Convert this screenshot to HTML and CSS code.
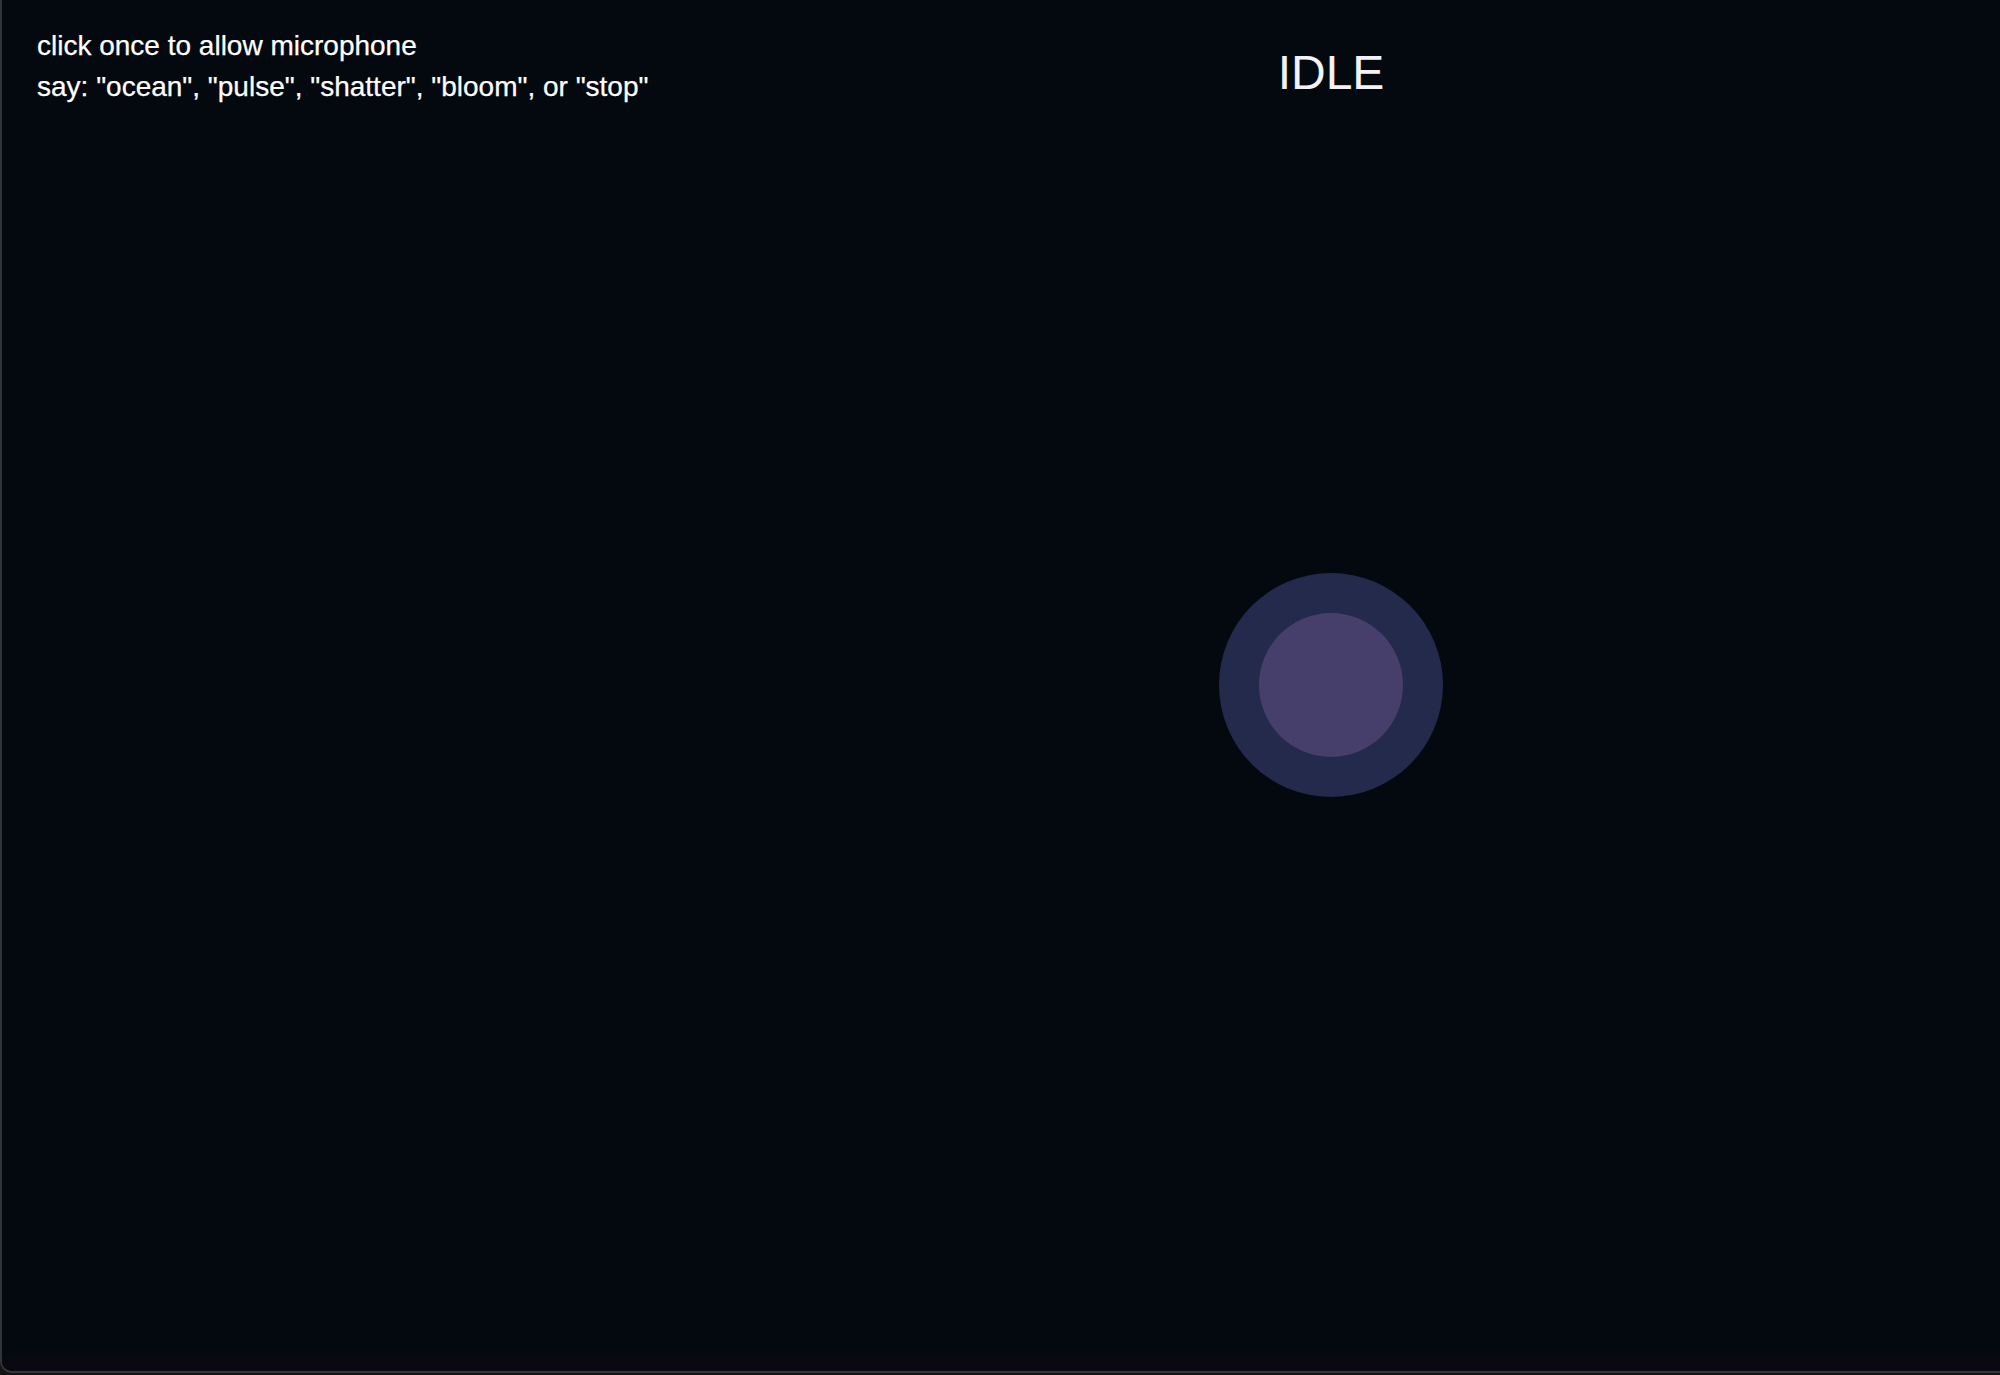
FILE: index.html
```html
<!DOCTYPE html>
<html>
<head>
<meta charset="utf-8">
<link rel="stylesheet" href="styles.css">
</head>
<body>
<div class="window">
  <div class="stage">
    <div class="hint">
      <div class="hint-line">click once to allow microphone</div>
      <div class="hint-line">say: "ocean", "pulse", "shatter", "bloom", or "stop"</div>
    </div>
    <div class="status">IDLE</div>
    <div class="orb"><div class="orb-core"></div></div>
  </div>
  <div class="strip"></div>
</div>
</body>
</html>
```

FILE: styles.css
```css
html, body {
  margin: 0;
  padding: 0;
}
body {
  width: 2000px;
  height: 1375px;
  background: #141414;
  overflow: hidden;
  font-family: "Liberation Sans", Arial, Helvetica, sans-serif;
}
.window {
  box-sizing: border-box;
  height: 1373px;
  display: flex;
  flex-direction: column;
  border-left: 2px solid #2f3439;
  border-bottom: 2px solid #363636;
  border-bottom-left-radius: 12px;
  overflow: hidden;
  background: #040910;
}
.stage {
  flex: 1;
  position: relative;
  background: #040910;
}
.hint {
  padding: 25px 0 0 35px;
  color: #ffffff;
  font-size: 28px;
  line-height: 41px;
  -webkit-text-stroke: 0.25px #ffffff;
}
.status {
  position: absolute;
  left: 1229px;
  width: 200px;
  top: 43px;
  text-align: center;
  color: #f2f2f7;
  font-size: 48px;
  line-height: 60px;
}
.orb {
  position: absolute;
  left: 1217px;
  top: 573px;
  width: 224px;
  height: 224px;
  border-radius: 50%;
  background: #242a4b;
  display: flex;
  align-items: center;
  justify-content: center;
}
.orb-core {
  width: 144px;
  height: 144px;
  border-radius: 50%;
  background: #473f6b;
}
.strip {
  height: 14px;
  background: #0a0811;
}
```
